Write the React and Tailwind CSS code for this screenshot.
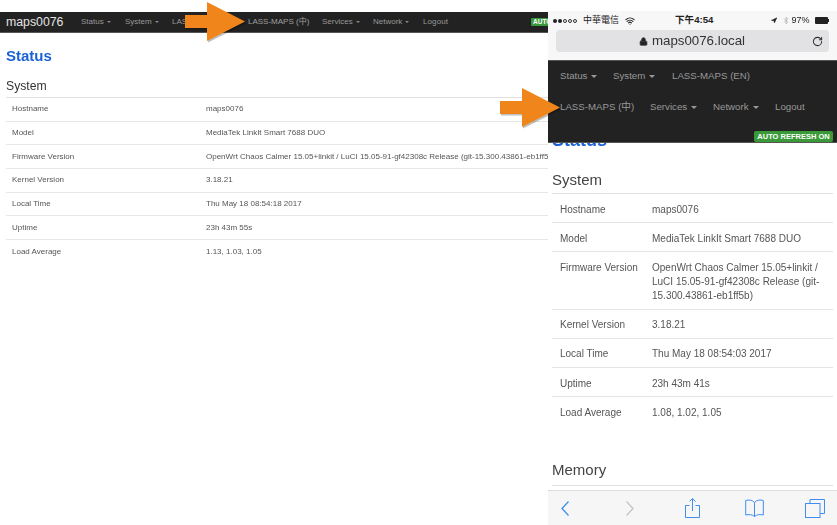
import { Lock, RotateCw, Wifi, Navigation, Bluetooth } from 'lucide-react';

const leftRows = [
  ['Hostname', 'maps0076'],
  ['Model', 'MediaTek LinkIt Smart 7688 DUO'],
  ['Firmware Version', 'OpenWrt Chaos Calmer 15.05+linkit / LuCI 15.05-91-gf42308c Release (git-15.300.43861-eb1ff5b)'],
  ['Kernel Version', '3.18.21'],
  ['Local Time', 'Thu May 18 08:54:18 2017'],
  ['Uptime', '23h 43m 55s'],
  ['Load Average', '1.13, 1.03, 1.05'],
];

const rightRows = [
  ['Hostname', 'maps0076'],
  ['Model', 'MediaTek LinkIt Smart 7688 DUO'],
  ['Firmware Version', 'OpenWrt Chaos Calmer 15.05+linkit / LuCI 15.05-91-gf42308c Release (git-15.300.43861-eb1ff5b)'],
  ['Kernel Version', '3.18.21'],
  ['Local Time', 'Thu May 18 08:54:03 2017'],
  ['Uptime', '23h 43m 41s'],
  ['Load Average', '1.08, 1.02, 1.05'],
];

const Caret = ({ small }) => (
  <span className={small ? 'ml-[3px] inline-block align-middle border-x-[2px] border-t-[2px] border-x-transparent border-t-[#888]' : 'ml-[4px] inline-block align-middle border-x-[3px] border-t-[3px] border-x-transparent border-t-[#999]'}></span>
);

const Arrow = ({ className }) => (
  <svg className={className} width="62" height="42" viewBox="0 0 62 42">
    <polygon points="1,13 23,13 23,0 61,20 23,39 23,26 1,26" fill="#000" opacity="0.25" transform="translate(0,1.5)" />
    <polygon points="0,13 22,13 22,0 60,19.5 22,39 22,26 0,26" fill="#f0861b" />
  </svg>
);

const App = () => {
  return (
    <div className="relative flex w-[837px] h-[525px] overflow-hidden bg-white font-['Liberation_Sans','Noto_Sans_CJK_TC',sans-serif]">

      {/* Desktop browser */}
      <div className="w-[548px] shrink-0 overflow-hidden pt-3 blur-[0.35px]">
        <div className="flex items-center h-[21px] bg-[#222] border-b border-[#555] whitespace-nowrap">
          <span className="ml-[6px] w-[75px] text-[12.3px] text-[#e4e4e4]">maps0076</span>
          <div className="flex items-center text-[8px] text-[#999] flex-1">
            <span className="w-[44px]">Status<Caret small /></span>
            <span className="w-[47px]">System<Caret small /></span>
            <span className="w-[76px]">LASS-MAPS (EN)</span>
            <span className="w-[74px] text-[#a0a0a0]">LASS-MAPS (中)</span>
            <span className="w-[51px]">Services<Caret small /></span>
            <span className="w-[50px]">Network<Caret small /></span>
            <span className="tracking-[0.1px]">Logout</span>
          </div>
          <span className="w-[17px] h-[8px] bg-[#3a9a3a] rounded-l-[1px] pl-[2px] text-[6.5px] leading-[8px] font-bold text-white overflow-hidden">AUTO</span>
        </div>

        <div className="pl-[6px]">
          <h1 className="mt-[14px] text-[15px] leading-[18px] font-bold text-[#1a62d6]">Status</h1>
          <h2 className="mt-[13px] text-[12.2px] leading-[16px] text-[#333]">System</h2>
          <div className="mt-[3px] w-[700px] border-t border-[#e0e0e0]">
            {leftRows.map(([label, value], i) => (
              <div key={label} className={i < 6 ? 'flex items-center h-[23.7px] border-b border-[#e6e6e6] text-[8px] text-[#555] whitespace-nowrap' : 'flex items-center h-[23.7px] text-[8px] text-[#555] whitespace-nowrap'}>
                <span className="w-[200px] pl-[6px]">{label}</span>
                <span>{value}</span>
              </div>
            ))}
          </div>
        </div>
      </div>

      {/* Phone browser */}
      <div className="w-[289px] h-full shrink-0 flex flex-col pt-[11px] blur-[0.35px]">
        <div className="bg-[#f7f7f7] h-[49px] px-2 shrink-0">
          <div className="flex items-center h-[19px] -ml-[3px] text-[9px] text-[#222] whitespace-nowrap">
            <div className="w-[122px] shrink-0 flex items-center">
              <span className="flex gap-[1px] mr-[6px]">
                <span className="w-[4px] h-[4px] rounded-full bg-[#222]"></span>
                <span className="w-[4px] h-[4px] rounded-full bg-[#222]"></span>
                <span className="w-[4px] h-[4px] rounded-full border-[0.5px] border-[#333]"></span>
                <span className="w-[4px] h-[4px] rounded-full border-[0.5px] border-[#333]"></span>
                <span className="w-[4px] h-[4px] rounded-full border-[0.5px] border-[#333]"></span>
              </span>
              <span>中華電信</span>
              <Wifi size={10} strokeWidth={2.5} className="ml-[6px]" />
            </div>
            <span className="w-[96px] shrink-0 font-bold text-[9.6px]">下午4:54</span>
            <Navigation size={7} fill="#222" className="mr-[5px]" />
            <Bluetooth size={9} className="mr-[1px] text-[#aaa]" />
            <span>97%</span>
            <span className="ml-[5px] block w-[15px] h-[7px] bg-[#222] rounded-[1px]"></span>
            <span className="block w-[1px] h-[3px] bg-[#222]"></span>
          </div>
          <div className="relative flex items-center justify-center h-[22px] bg-[#e2e2e4] rounded-[4px] text-[13.3px] text-[#333]">
            <Lock size={9} fill="#222" className="mr-[5px]" />
            <span className="-translate-x-[1px]">maps0076.local</span>
            <RotateCw size={11} strokeWidth={2.2} className="absolute right-[6px]" />
          </div>
        </div>

        <div className="flex-1 min-h-0 overflow-hidden relative">
          <div className="relative z-10 h-[83px] bg-[#222] border-y border-[#555] text-[9.7px] text-[#999] whitespace-nowrap">
            <div className="flex items-center h-[31px] pl-[12px]">
              <span className="w-[53px]">Status<Caret /></span>
              <span className="w-[59px]">System<Caret /></span>
              <span>LASS-MAPS (EN)</span>
            </div>
            <div className="flex items-center h-[31px] pl-[12px]">
              <span className="w-[90px]">LASS-MAPS (中)</span>
              <span className="w-[63px]">Services<Caret /></span>
              <span className="w-[62px]">Network<Caret /></span>
              <span>Logout</span>
            </div>
            <div className="flex justify-end pr-[4px] pt-[8px]">
              <span className="h-[11px] w-[79px] text-center bg-[#3a9a3a] rounded-[2px] text-[7.5px] leading-[11px] font-bold text-white">AUTO REFRESH ON</span>
            </div>
          </div>

          <div className="px-[4px]">
            <h1 className="-mt-[13px] text-[18px] leading-[20px] font-bold text-[#1a62d6]">Status</h1>
            <h2 className="mt-[20px] text-[15px] leading-[20px] text-[#444]">System</h2>
            <div className="mt-[3px] border-t border-[#e0e0e0]">
              {rightRows.map(([label, value], i) => (
                <div key={label} className={i < 6 ? 'flex border-b border-[#e4e4e4] pt-[8.7px] pb-[5.5px] text-[10px] leading-[14px] text-[#555]' : 'flex pt-[8.7px] pb-[5.5px] text-[10px] leading-[14px] text-[#555]'}>
                  <span className="w-[100px] pl-[8px] shrink-0">{label}</span>
                  <span className="w-[172px]">{value}</span>
                </div>
              ))}
            </div>
            <h2 className="mt-[35px] text-[15px] leading-[20px] text-[#444]">Memory</h2>
            <div className="mt-[5px] border-t border-[#e0e0e0]"></div>
          </div>
        </div>

        {/* Safari toolbar */}
        <div className="shrink-0 h-[35px] flex items-center pl-[13px] bg-[#f6f6f6] border-t border-[#ddd]">
          <svg width="8" height="15" viewBox="0 0 8 15" fill="none" stroke="#3f8ff0" strokeWidth="1.3"><path d="M7.5 0.5L1 7.5l6.5 7" /></svg>
          <svg className="ml-[57px]" width="8" height="15" viewBox="0 0 8 15" fill="none" stroke="#c4c4c4" strokeWidth="1.3"><path d="M0.5 0.5L7 7.5l-6.5 7" /></svg>
          <svg className="ml-[51px]" width="15" height="20" viewBox="0 0 15 20" fill="none" stroke="#3f8ff0" strokeWidth="1"><path d="M4.5 7.5H.5v12h14v-12h-4M7.5 13V1M4.5 3.500l3-3 3 3" /></svg>
          <svg className="ml-[45px]" width="19" height="19" viewBox="0 0 19 19" fill="none" stroke="#3f8ff0" strokeWidth="1"><path d="M9.500 3.500C7.500 1 3.500.5.700 1.500v14.500c3-.8 6.800-.5 8.800 1.500 2-2 5.800-2.300 8.800-1.500V1.500C15.500.5 11.500 1 9.500 3.500zM9.500 3.500v14" /></svg>
          <svg className="ml-[41px]" width="20" height="19" viewBox="0 0 20 19" fill="none" stroke="#3f8ff0" strokeWidth="1"><path d="M5 4.500V.5h14.500v14H15" /><rect x=".5" y="4.500" width="14.500" height="14" /></svg>
        </div>
      </div>

      {/* Callout arrows */}
      <Arrow className="absolute left-[185px] top-[2px] z-20" />
      <Arrow className="absolute left-[500px] top-[88px] z-20" />
    </div>
  );
};

export default App;
